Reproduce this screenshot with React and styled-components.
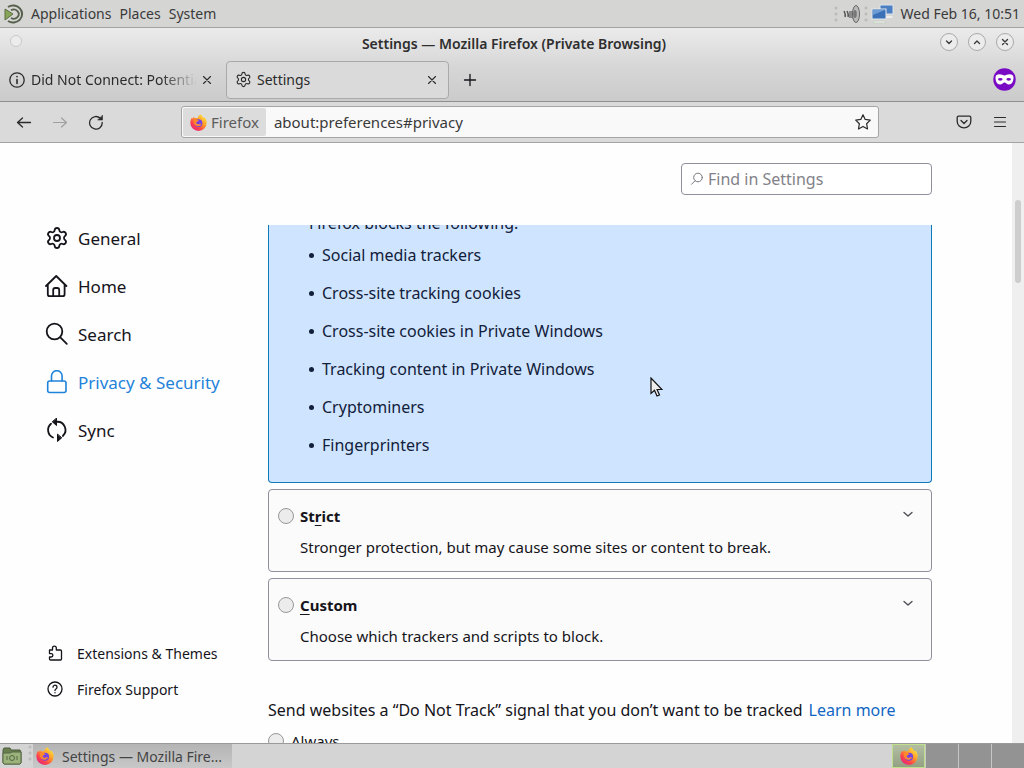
import React from 'react'
import styled, { createGlobalStyle } from 'styled-components'
import { Settings } from 'lucide-react'

const GlobalStyle = createGlobalStyle`
  * {
    box-sizing: border-box;
  }
  body {
    margin: 0;
    overflow: hidden;
    font-family: "Noto Sans", sans-serif;
    font-size: 15px;
    color: #15141a;
  }
  button, input {
    font: inherit;
    color: inherit;
  }
  button {
    display: flex;
    align-items: center;
    background: none;
    border: 0;
    padding: 0;
  }
  a {
    color: inherit;
    text-decoration: none;
  }
  svg {
    display: block;
    flex-shrink: 0;
  }
`;

const Desktop = styled.div`
  display: flex;
  flex-direction: column;
  height: 100vh;
  overflow: hidden;
`;

/* desktop panel */

const Panel = styled.header`
  display: flex;
  align-items: center;
  justify-content: space-between;
  flex-shrink: 0;
  height: 28px;
  padding: 0 4px;
  background: #d5d5d4;
  border-bottom: 1px solid #a3a3a3;
  font-size: 14px;
  color: #3a3a3a;
`;

const PanelGroup = styled.div`
  display: flex;
  align-items: center;
  gap: ${({ gap }) => gap}px;
`;

const Grip = styled.span`
  width: 6px;
  height: 18px;
  background-image: radial-gradient(circle, #bcbcbc 1px, transparent 2px);
  background-size: 6px 6px;
`;

/* browser chrome */

const WindowTop = styled.div`
  flex-shrink: 0;
  background: linear-gradient(#ebebeb, #d6d6d6 40px, #cbcbcb);
  border-bottom: 1px solid #8f8f8f;
`;

const TitleBar = styled.div`
  display: grid;
  grid-template-columns: 1fr auto 1fr;
  align-items: center;
  height: 30px;
  padding: 0 10px;

  h1 {
    margin: 0;
    padding: 2px 0 0 4px;
    font-size: 14px;
    font-weight: 600;
    line-height: 20px;
    color: #2e2e2e;
  }
`;

const WindowDot = styled.span`
  width: 12px;
  height: 12px;
  margin-bottom: 4px;
  border: 1px solid #c9c9c9;
  border-radius: 50%;
  background: #ececec;
`;

const WindowButtons = styled.div`
  display: flex;
  justify-content: flex-end;
  gap: 10px;
`;

const WindowButton = styled.button`
  justify-content: center;
  width: 18px;
  height: 18px;
  margin-bottom: 2px;
  border: 1px solid #a9a9a9;
  border-radius: 50%;
  background: #ececec;
  color: #3c3c3c;
`;

const TabStrip = styled.div`
  display: flex;
  align-items: center;
  height: 43px;
  padding: 0 8px 0 0;
`;

const Tab = styled.div`
  display: flex;
  align-items: center;
  width: ${({ $selected }) => ($selected ? 223 : 226)}px;
  height: 38px;
  padding: 0 ${({ $selected }) => ($selected ? 11 : 14)}px 0 8px;
  gap: 5px;
  font-size: 14px;
  color: #2b2b2b;
  ${({ $selected }) => $selected && `
    background: #dadada;
    border: 1px solid #a9a9a9;
    border-radius: 4px;
  `}
`;

const TabLabel = styled.span`
  flex: 1;
  overflow: hidden;
  white-space: nowrap;
  ${({ $fade }) => $fade && 'mask-image: linear-gradient(to left, transparent, #000 36px);'}
`;

const NewTab = styled.button`
  margin-left: 13px;
`;

const PrivateBadge = styled.span`
  margin-left: auto;
`;

const NavBar = styled.div`
  display: flex;
  align-items: center;
  flex-shrink: 0;
  height: 41px;
  padding: 0 16px;
  background: #dadada;
  border-bottom: 1px solid #a3a3a3;
  color: #2b2b2b;
`;

const NavButtons = styled.div`
  display: flex;
  gap: 20px;
  width: 165px;
`;

const UrlBar = styled.div`
  display: flex;
  align-items: center;
  flex: 1;
  height: 32px;
  padding-right: 6px;
  background: #f9f9f9;
  border: 1px solid #a5a5a5;
  border-radius: 3px;

  input {
    flex: 1;
    min-width: 0;
    padding: 0 8px;
    border: 0;
    background: none;
    color: #3a3a3a;
    outline: 0;
  }
`;

const Identity = styled.div`
  display: flex;
  align-items: center;
  gap: 4px;
  height: 28px;
  margin-left: 1px;
  padding: 0 7px;
  background: #dcdcdc;
  border-radius: 2px;
  color: #5b5b5b;
`;

const ToolButtons = styled.div`
  display: flex;
  justify-content: flex-end;
  gap: 20px;
  width: 129px;
`;

/* preferences page */

const Page = styled.div`
  display: flex;
  flex: 1;
  min-height: 0;
  background: #fefefe;
`;

const Sidebar = styled.aside`
  display: flex;
  flex-direction: column;
  justify-content: space-between;
  width: 240px;
  padding: 71px 0 36px 45px;
`;

const NavList = styled.nav`
  display: flex;
  flex-direction: column;
`;

const Category = styled.a`
  display: flex;
  align-items: center;
  gap: 9px;
  height: 48px;
  font-size: 17px;
  && {
    color: ${({ $active }) => ($active ? '#1f83da' : '#15141a')};
  }
`;

const FooterLink = styled.a`
  display: flex;
  align-items: center;
  gap: 14px;
  height: 36px;
  padding-left: 2px;
  font-size: 14px;
`;

const Main = styled.main`
  display: flex;
  flex-direction: column;
  flex: 1;
  max-width: 692px;
  padding-left: 28px;
`;

const SearchBox = styled.label`
  display: flex;
  align-items: center;
  gap: 4px;
  align-self: flex-end;
  flex-shrink: 0;
  width: 251px;
  height: 32px;
  margin: 20px 0 30px;
  padding: 0 8px;
  border: 1px solid #8f8f9d;
  border-radius: 4px;
  background: #fff;

  input {
    flex: 1;
    min-width: 0;
    padding: 0;
    border: 0;
    outline: 0;
    background: none;
    font-size: 16px;
    &::placeholder {
      color: #828288;
      opacity: 1;
    }
  }
`;

const ScrollPane = styled.div`
  flex: 1;
  min-height: 0;
  overflow: hidden;
`;

const StandardCard = styled.section`
  height: 258px;
  padding: 0 40px;
  overflow: hidden;
  background: #cfe5ff;
  border: 1px solid #0f7ab8;
  border-top: 0;
  border-radius: 0 0 4px 4px;
  color: #12203a;
  font-size: 16px;

  p {
    margin: -15px 0 0;
    line-height: 26px;
  }
  ul {
    margin: 0;
    padding: 0;
    list-style: none;
  }
  li {
    display: flex;
    align-items: center;
    gap: 8px;
    line-height: 38px;
  }
  li::before {
    content: "";
    width: 5px;
    height: 5px;
    border-radius: 50%;
    background: currentColor;
  }
`;

const OptionCard = styled.section`
  display: flex;
  gap: 6px;
  margin-top: 6px;
  padding: 13px 16px 11px 9px;
  background: #fbfbfb;
  border: 1px solid #8f8f9d;
  border-radius: 4px;

  div {
    flex: 1;
  }
  label {
    display: block;
    font-weight: 700;
    line-height: 26px;
    text-underline-offset: 3px;
  }
  p {
    margin: 6px 0 0;
    line-height: 25px;
  }
  button {
    height: 22px;
  }
`;

const Radio = styled.input`
  appearance: none;
  flex-shrink: 0;
  width: 16px;
  height: 16px;
  margin: 5px 0 0;
  border: 1px solid #97979b;
  border-radius: 50%;
  background: #ececec;
`;

const TrackRow = styled.p`
  display: flex;
  gap: 6px;
  margin: 36px 0 0;
  font-size: 16px;
  line-height: 26px;

  a {
    color: #1166c4;
  }
`;

const ChoiceRow = styled.div`
  display: flex;
  gap: 7px;
  margin-top: 5px;
  line-height: 26px;
`;

const ScrollTrack = styled.div`
  display: flex;
  justify-content: center;
  width: 12px;
  margin-left: auto;
  background: #efefef;

  span {
    width: 6px;
    height: 83px;
    margin-top: 57px;
    border-radius: 3px;
    background: #cdcdcd;
  }
`;

/* window list */

const TaskBar = styled.footer`
  display: flex;
  flex-shrink: 0;
  align-items: stretch;
  height: 25px;
  background: #d3d4d3;
  border-top: 1px solid #9a9a9a;
  font-size: 14px;
  color: #444;
`;

const Launcher = styled.button`
  padding: 0 5px 0 2px;
`;

const TaskButton = styled.button`
  gap: 8px;
  width: 199px;
  padding: 0 3px;
  margin-right: auto;
  background: linear-gradient(#b4b4b4, #c8c8c8);
  white-space: nowrap;
`;

const Workspace = styled.button`
  justify-content: center;
  width: 33px;
  border-left: 1px solid #c6c6c6;
  background: ${({ $current }) => ($current ? 'linear-gradient(#b4bfa2, #93a083)' : '#939393')};
  ${({ $current }) => $current && 'border: 1px solid #bfe08a;'}
`;

/* Icons */

const Stroke = ({ size = 16, box = 16, width = 1.2, color = 'currentColor', children }) => (
  <svg width={size} height={size} viewBox={`0 0 ${box} ${box}`} fill="none" stroke={color}
    strokeWidth={width} strokeLinecap="round" strokeLinejoin="round">
    {children}
  </svg>
)

const FirefoxLogo = ({ id, size = 16 }) => (
  <svg width={size} height={size} viewBox="0 0 16 16">
    <defs>
      <linearGradient id={id} x1="0.85" y1="0.1" x2="0.2" y2="0.9">
        <stop offset="0" stopColor="#ffe23f" />
        <stop offset="0.4" stopColor="#ff9a28" />
        <stop offset="0.75" stopColor="#ff4548" />
        <stop offset="1" stopColor="#e62a74" />
      </linearGradient>
    </defs>
    <path fill={`url(#${id})`} d="M10 0.3c1 .8 1.5 1.6 1.9 2.6.6.2 1 .6 1.4 1.1L13.600 3c1.600 1.600 2.200 3.600 2.100 5.500a7.700 7.400 0 0 1-15.400 0c0-2.100.6-3.800 1.500-5.200l.2 1.300c.6-1 1.200-1.500 2-2l.1 1.500c1-.5 2-.5 3.100-.3C7.600 2.300 8.700 1 10 .3z" />
    <circle cx="8" cy="8.600" r="3.600" fill="#7543e3" />
    <path fill="#ff8a2c" d="M3.600 5.600c1.700-.7 3.300-.4 4.400.3.300.8-.5 1.300-1.700 1.400-.8.700-.3 2 1 2.300 1.400.3 2.200-.9 3.600-.4-.8 1.700-2.500 2.600-4.300 2.100-2.200-.6-3.700-3-3-5.700z" />
  </svg>
)

const MateLogo = () => (
  <svg width="22" height="20" viewBox="0 0 22 20" fill="none">
    <path d="M1 5l8 5-8 6z" fill="#87a556" stroke="#5d6e45" />
    <path d="M4 3a9 8.500 0 1 1 0 14" stroke="#56604c" strokeWidth="2" />
    <path d="M7 6.200a5 4.600 0 1 1 0 7.800" stroke="#56604c" strokeWidth="1.800" />
  </svg>
)

const Speaker = () => (
  <svg width="20" height="22" viewBox="0 0 20 22">
    <path d="M8 8h3l5-6v18l-5-5H8z" fill="#8a8a8a" />
    <ellipse cx="15" cy="11" rx="3.500" ry="8.500" fill="#b9b9b9" stroke="#666" />
    <ellipse cx="14" cy="11" rx="1.800" ry="4" fill="#777" />
    <path d="M3 8q2 4 1 6M6 8q2 4 1 6" stroke="#555" strokeWidth="1.400" fill="none" />
  </svg>
)

const Network = () => (
  <svg width="24" height="22" viewBox="0 0 24 22">
    <rect x="9" y="2" width="13" height="9" fill="#4a7fc1" stroke="#dfe5ec" />
    <path d="M13 13h8l1 2h-9z" fill="#eee" />
    <rect x="1" y="6" width="14" height="10" fill="#3a70b5" stroke="#e2e8ee" />
    <path d="M2 7h12L2 12z" fill="#6d9bd3" />
    <path d="M3 18h11l1 2H2z" fill="#f1f1f1" stroke="#c5d0c0" />
  </svg>
)

const PrivateMask = () => (
  <svg width="23" height="23" viewBox="0 0 23 23">
    <circle cx="11.500" cy="11.500" r="11.200" fill="#7a0bc4" />
    <path fill="#fff" d="M2.500 9.500c0-2 1.500-3.200 4-3.200 2.300 0 3.500 1.200 5 1.200s2.700-1.200 5-1.200c2.500 0 4 1.200 4 3.200 0 3.700-1.500 7-4.500 7-2.300 0-3.100-2-4.500-2s-2.200 2-4.500 2c-3 0-4.500-3.300-4.500-7z" />
    <ellipse cx="7.300" cy="11.300" rx="2.300" ry="1.400" fill="#7a0bc4" />
    <ellipse cx="15.700" cy="11.300" rx="2.300" ry="1.400" fill="#7a0bc4" />
  </svg>
)

const Folder = () => (
  <svg width="20" height="18" viewBox="0 0 20 18">
    <path d="M1 3l1-2h6l1 2h9l1 2v11l-1 1H2l-1-1z" fill="#687e4f" stroke="#4d5c3f" />
    <path d="M1 6h7l2-1h9v11l-1 1H2l-1-1z" fill="#9bb37b" stroke="#566647" />
    <circle cx="10" cy="11" r="2.500" fill="none" stroke="#566647" />
    <path d="M5 9v4M15 9v4" stroke="#566647" />
  </svg>
)

const CloseIcon = () => (
  <Stroke size={10} box={10} width={1.1}><path d="M1.500 1.500l7 7M8.500 1.500l-7 7" /></Stroke>
)

const Pointer = styled.svg`
  position: absolute;
  left: 650px;
  top: 377px;
`;

const categories = [
  { name: 'General', icon: <Settings size={24} strokeWidth={1.8} /> },
  {
    name: 'Home',
    icon: (
      <Stroke size={24} box={24} width={1.8}>
        <path d="M1 12L11.200 2l10.200 10M2.800 10.500v9.700a2 2 0 0 0 2 2h12.800a2 2 0 0 0 2-2v-9.700" />
        <path d="M8.200 22v-6a2 2 0 0 1 2-2h2a2 2 0 0 1 2 2v6" />
      </Stroke>
    )
  },
  {
    name: 'Search',
    icon: <Stroke size={24} box={24} width={1.8}><circle cx="9.500" cy="9.500" r="7.800" /><path d="M15.300 15.300l6.500 6.500" /></Stroke>
  },
  {
    name: 'Privacy & Security',
    active: true,
    icon: (
      <Stroke size={24} box={24} width={1.6}>
        <rect x="2.700" y="11" width="18.300" height="11.500" rx="2" />
        <path d="M6.500 11V6a5.300 5.300 0 0 1 10.600 0v5" />
      </Stroke>
    )
  },
  {
    name: 'Sync',
    icon: (
      <Stroke size={24} box={24} width={1.8}>
        <path d="M8 19.500A8.200 8.200 0 0 1 6 5.700M11.500 3.800A8.200 8.200 0 0 1 17.800 18" />
        <path d="M11.500 .5v7L7.500 4zM12.500 16.500v7l4-3.500z" fill="currentColor" strokeWidth="1" />
      </Stroke>
    )
  }
]

const blocked = [
  'Social media trackers',
  'Cross-site tracking cookies',
  'Cross-site cookies in Private Windows',
  'Tracking content in Private Windows',
  'Cryptominers',
  'Fingerprinters'
]

const Option = ({ id, label, text }) => (
  <OptionCard>
    <Radio type="radio" name="category" id={id} />
    <div>
      <label htmlFor={id}>{label}</label>
      <p>{text}</p>
    </div>
    <button aria-label="Expand">
      <Stroke size={14} box={14} width={1.3} color="#4a4a52"><path d="M3 5.500l4 3.500 4-3.500" /></Stroke>
    </button>
  </OptionCard>
)

const App = () => {
  return (
    <Desktop>
      <GlobalStyle />
      <Panel>
        <PanelGroup gap={8}>
          <PanelGroup gap={5}>
            <MateLogo />
            <span>Applications</span>
          </PanelGroup>
          <span>Places</span>
          <span>System</span>
        </PanelGroup>
        <PanelGroup gap={6}>
          <PanelGroup gap={2}>
            <Grip />
            <Speaker />
            <Grip />
            <Network />
          </PanelGroup>
          <span>Wed Feb 16, 10:51</span>
        </PanelGroup>
      </Panel>

      <WindowTop>
        <TitleBar>
          <WindowDot />
          <h1>Settings — Mozilla Firefox (Private Browsing)</h1>
          <WindowButtons>
            <WindowButton aria-label="Minimize">
              <Stroke size={10} box={10} width={1.4}><path d="M2.500 4L5 6.500 7.500 4" /></Stroke>
            </WindowButton>
            <WindowButton aria-label="Maximize">
              <Stroke size={10} box={10} width={1.4}><path d="M2.500 6.500L5 4l2.500 2.500" /></Stroke>
            </WindowButton>
            <WindowButton aria-label="Close">
              <Stroke size={10} box={10} width={1.4}><path d="M2.500 2.500l5 5M7.500 2.500l-5 5" /></Stroke>
            </WindowButton>
          </WindowButtons>
        </TitleBar>

        <TabStrip>
          <Tab>
            <Stroke size={18} box={18} width={1.3}>
              <circle cx="9" cy="9" r="7.200" />
              <path d="M9 8.500v4M9 5.500v.3" strokeWidth="1.600" />
            </Stroke>
            <TabLabel $fade>Did Not Connect: Potential</TabLabel>
            <button aria-label="Close tab"><CloseIcon /></button>
          </Tab>
          <Tab $selected>
            <Settings size={17} strokeWidth={1.6} />
            <TabLabel>Settings</TabLabel>
            <button aria-label="Close tab"><CloseIcon /></button>
          </Tab>
          <NewTab aria-label="New tab">
            <Stroke width={1.3}><path d="M8 2.500v11M2.500 8h11" /></Stroke>
          </NewTab>
          <PrivateBadge><PrivateMask /></PrivateBadge>
        </TabStrip>
      </WindowTop>

      <NavBar>
        <NavButtons>
          <button aria-label="Back">
            <Stroke width={1.3}><path d="M1.500 8.500h13M6.500 4L1.500 8.500l5 4.500" /></Stroke>
          </button>
          <button aria-label="Forward">
            <Stroke width={1.2} color="#a0a0a0"><path d="M1.500 8.500h13M9.500 4l5 4.500-5 4.500" /></Stroke>
          </button>
          <button aria-label="Reload">
            <Stroke width={1.3}>
              <path d="M14.200 8.500A6.300 6.300 0 1 1 12.300 4.300" />
              <path d="M14.500 1.500v4.500h-4.500z" fill="currentColor" strokeWidth="0.600" />
            </Stroke>
          </button>
        </NavButtons>
        <UrlBar>
          <Identity>
            <FirefoxLogo id="fx-url" size={17} />
            <span>Firefox</span>
          </Identity>
          <input type="text" aria-label="Address" defaultValue="about:preferences#privacy" />
          <button aria-label="Bookmark this page">
            <Stroke size={18} box={18} width={1.2}>
              <path d="M9 1.700l2.200 4.700 5.100.7-3.700 3.600.9 5.200L9 13.400l-4.500 2.500.9-5.200L1.700 7.100l5.100-.7z" />
            </Stroke>
          </button>
        </UrlBar>
        <ToolButtons>
          <button aria-label="Save to Pocket">
            <Stroke width={1.3}>
              <path d="M2.500 2.200h11a1.300 1.300 0 0 1 1.300 1.300v4a6.800 6.300 0 0 1-13.600 0v-4a1.300 1.300 0 0 1 1.300-1.300z" />
              <path d="M5 6.500l3 3 3-3" />
            </Stroke>
          </button>
          <button aria-label="Menu">
            <Stroke width={1.2}><path d="M2.500 3.500h11M2.500 8h11M2.500 12.500h11" /></Stroke>
          </button>
        </ToolButtons>
      </NavBar>

      <Page>
        <Sidebar>
          <NavList>
            {categories.map((c) => (
              <Category key={c.name} href="#" $active={c.active}>
                {c.icon}
                <span>{c.name}</span>
              </Category>
            ))}
          </NavList>
          <NavList>
            <FooterLink href="#">
              <Stroke width={1.3}>
                <path d="M2.500 5h3V3a1.900 1.900 0 0 1 3.800 0v2h4.200a1 1 0 0 1 1 1v8a1 1 0 0 1-1 1h-10a1 1 0 0 1-1-1v-2h1.700a1.700 1.700 0 0 0 0-3.400H2.500z" />
              </Stroke>
              Extensions &amp; Themes
            </FooterLink>
            <FooterLink href="#">
              <Stroke width={1.3}>
                <circle cx="8" cy="8" r="7" />
                <path d="M6 6.200a2 2 0 1 1 3.200 1.600C8.300 8.400 8 8.800 8 9.500M8 11.700v.1" />
              </Stroke>
              Firefox Support
            </FooterLink>
          </NavList>
        </Sidebar>

        <Main>
          <SearchBox>
            <Stroke size={14} box={14} width={1} color="#77777d"><circle cx="8" cy="5.500" r="4.300" /><path d="M5 8.800L1.500 12.300" /></Stroke>
            <input type="text" aria-label="Find in Settings" placeholder="Find in Settings" />
          </SearchBox>
          <ScrollPane>
            <StandardCard>
              <p>Firefox blocks the following:</p>
              <ul>
                {blocked.map((item) => <li key={item}>{item}</li>)}
              </ul>
            </StandardCard>
            <Option
              id="strict"
              label={<>St<u>r</u>ict</>}
              text="Stronger protection, but may cause some sites or content to break."
            />
            <Option
              id="custom"
              label={<><u>C</u>ustom</>}
              text="Choose which trackers and scripts to block."
            />
            <TrackRow>
              <span>Send websites a “Do Not Track” signal that you don’t want to be tracked</span>
              <a href="#">Learn more</a>
            </TrackRow>
            <ChoiceRow>
              <Radio type="radio" name="dnt" id="always" />
              <label htmlFor="always">Always</label>
            </ChoiceRow>
          </ScrollPane>
        </Main>
        <ScrollTrack><span /></ScrollTrack>
      </Page>

      <TaskBar>
        <Launcher aria-label="Show files"><Folder /></Launcher>
        <Grip />
        <TaskButton>
          <FirefoxLogo id="fx-task" size={18} />
          <span>Settings — Mozilla Fire...</span>
        </TaskButton>
        <Workspace $current aria-label="Workspace 1"><FirefoxLogo id="fx-ws" size={18} /></Workspace>
        <Workspace aria-label="Workspace 2" />
        <Workspace aria-label="Workspace 3" />
        <Workspace aria-label="Workspace 4" />
      </TaskBar>

      <Pointer width="13" height="21" viewBox="0 0 13 21">
        <path d="M1 1v15.500l3.500-3.200L7 19l2.500-1-2.400-5.500h4.900z" fill="#eee" stroke="#111" strokeWidth="1.200" />
      </Pointer>
    </Desktop>
  );
}

export default App
